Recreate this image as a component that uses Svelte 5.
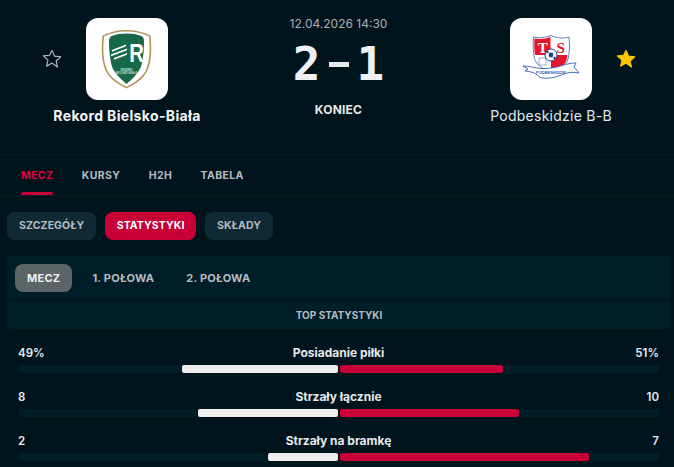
<script>
  const tabs = ['MECZ', 'KURSY', 'H2H', 'TABELA'];
  const pills = ['SZCZEGÓŁY', 'STATYSTYKI', 'SKŁADY'];
  const periods = ['MECZ', '1. POŁOWA', '2. POŁOWA'];
  const stats = [
    { name: 'Posiadanie piłki', home: '49%', away: '51%', h: 49, a: 51 },
    { name: 'Strzały łącznie', home: '8', away: '10', h: 44, a: 56 },
    { name: 'Strzały na bramkę', home: '2', away: '7', h: 22, a: 78 }
  ];
</script>

<div class="page">
  <header class="match">
    <div class="side">
      <svg class="star" viewBox="0 0 24 24" width="22" height="22">
        <path d="M12 2.600l2.800 6.300 6.800.7-5.100 4.600 1.500 6.700L12 16.400l-5.900 3.500 1.500-6.700-5.100-4.600 6.800-.7z" fill="none" stroke="#b9c0c4" stroke-width="1.200" stroke-linejoin="round" />
      </svg>
      <div class="team">
        <div class="logo">
          <svg viewBox="0 0 82 82" width="82" height="82">
            <path d="M40.500 12c9 0 17 2 24 5.500 1.500 14 1 25-3 35-4 8-11 13-21 18-10-5-17-10-21-18-4-10-4.500-21-3-35 7-3.500 15-5.500 24-5.500z" fill="#b2935a" />
            <path d="M40.500 13.500c8 0 16 1.800 22.500 5 1.300 13 .8 23.500-3 33.500-3.800 7.400-10 12-19.500 16.800-9.500-4.800-15.700-9.400-19.500-16.800-3.800-10-4.300-20.500-3-33.500 6.500-3.200 14.500-5 22.500-5z" fill="#fff" />
            <path d="M40.500 15.500c5.500 0 11 .8 15 2.500 1.500 1 2.500 2.500 2.500 5 0 10-1 20-3.500 27-3.400 6.600-8 11-14 16-6-5-10.600-9.400-14-16-2.500-7-3.500-17-3.500-27 0-2.500 1-4 2.500-5 4-1.700 9.500-2.500 15-2.500z" fill="#17694a" />
            <text transform="translate(50.500 44) scale(0.78 1)" class="rek">R</text>
            <path d="M26 32l14-5.500v1.800l-14 5.500zM25 36.500l16-6v1.800l-16 6zM28 40l13-5v1.800l-13 5z" fill="#fff" />
            <text x="40.500" y="52.500" class="rek-small">REKORD</text>
            <text x="40.500" y="56" class="rek-small">BIELSKO-BIAŁA</text>
          </svg>
        </div>
        <div class="name strong">Rekord Bielsko-Biała</div>
      </div>
    </div>

    <div class="center">
      <div class="date">12.04.2026 14:30</div>
      <div class="score"><span>2</span><i></i><span>1</span></div>
      <div class="status">KONIEC</div>
    </div>

    <div class="side away">
      <div class="team">
        <div class="logo">
          <svg viewBox="0 0 82 82" width="82" height="82">
            <path d="M23.500 19c6 1.500 12 .5 17.500-1.500 5.500 2.500 12 3.500 18 1.500 1 9 .5 16-1 22-2 6.500-7.500 10-16.500 13-9-3-15-7-17-13.500-1.500-6-1.500-13.500-1-21.500z" fill="#fff" stroke="#3560b0" stroke-width="0.8" />
            <path d="M24.500 20.500c5.500 1 11 .5 16-1.500v18H25c-.8-5-1-10.500-.5-16.500zM41 37h16.500c-.3 2-.7 3.500-1 5-1.500 5-6 8.500-15.500 11.500z" fill="#e4162d" />
            <text x="32.700" y="35" class="ts white">T</text>
            <text x="50.700" y="35" class="ts red">S</text>
            <path d="M29 40h7v7h-7z" fill="none" stroke="#7f9bcc" stroke-width="0.8" />
            <circle cx="41" cy="37" r="6" fill="#fff" stroke="#1c3f8f" />
            <circle cx="41" cy="37" r="2.400" fill="#1c3f8f" />
            <circle cx="37.500" cy="34" r="1.200" fill="#1c3f8f" />
            <circle cx="44.500" cy="40" r="1.200" fill="#1c3f8f" />
            <path d="M13 48c6 0 12 2 18 2.500 8 .5 15-1 21-3 5-1.500 9-2.500 14-2.500l-2 4 5 6c-5-1-10-1-15 1-7 3-15 5-22 4-2.500-.5-4-2-6-4-3-2-7-2.500-11-3l3-2z" fill="#fff" stroke="#3560b0" stroke-width="0.9" />
            <text x="41" y="56" class="ts-small">PODBESKIDZIE</text>
          </svg>
        </div>
        <div class="name">Podbeskidzie B-B</div>
      </div>
      <svg class="star" viewBox="0 0 24 24" width="22" height="22">
        <path d="M12 2.600l2.800 6.300 6.800.7-5.100 4.600 1.500 6.700L12 16.400l-5.900 3.500 1.500-6.700-5.100-4.600 6.800-.7z" fill="#fdc700" stroke="#fdc700" stroke-width="1.200" stroke-linejoin="round" />
      </svg>
    </div>
  </header>

  <nav class="tabs">
    {#each tabs as tab, i}
      <div class="tab" class:active={i === 0}>{tab}</div>
    {/each}
  </nav>

  <div class="pills">
    {#each pills as pill, i}
      <div class="pill" class:on={i === 1}>{pill}</div>
    {/each}
  </div>

  <section class="panel">
    <div class="periods">
      {#each periods as p, i}
        <div class="period" class:on={i === 0}>{p}</div>
      {/each}
    </div>
    <div class="panel-title">TOP STATYSTYKI</div>
  </section>

  <section class="stats">
    {#each stats as s}
      <div class="stat">
        <div class="labels">
          <span>{s.home}</span>
          <span class="stat-name">{s.name}</span>
          <span class="end">{s.away}</span>
        </div>
        <div class="bars">
          <div class="track left"><div class="fill home" style="width: {s.h}%"></div></div>
          <div class="track"><div class="fill guest" style="width: {s.a}%"></div></div>
        </div>
      </div>
    {/each}
  </section>
</div>

<style>
  :global(body) {
    background: #00141e;
    overflow: hidden;
  }

  .page {
    width: 674px;
    height: 467px;
    overflow: hidden;
    background: #00141e;
    color: #eef0f1;
    font-family: Inter, "Noto Sans", sans-serif;
  }

  .match {
    display: grid;
    grid-template-columns: 1fr 120px 1fr;
    height: 155px;
    padding-top: 18px;
    box-sizing: border-box;
    border-bottom: 1px solid #001e28;
  }

  .side {
    display: flex;
    align-items: flex-start;
    padding-left: 41px;
  }

  .side.away {
    justify-content: flex-end;
    padding-left: 0;
    padding-right: 37px;
  }

  .star {
    margin-top: 30px;
    flex: none;
  }

  .team {
    width: 128px;
    display: flex;
    flex-direction: column;
    align-items: center;
  }

  .logo {
    width: 82px;
    height: 82px;
    background: #fff;
    border-radius: 12px;
  }

  .logo svg {
    display: block;
  }

  .rek {
    font: 700 26px "Liberation Sans", sans-serif;
    fill: #fff;
    text-anchor: middle;
  }

  .rek-small {
    font: 700 2.800px Inter, sans-serif;
    fill: #cfe0d8;
    text-anchor: middle;
  }

  .ts {
    font: 700 15px "Liberation Serif", serif;
    text-anchor: middle;
  }

  .white {
    fill: #fff;
  }

  .red {
    fill: #e4162d;
  }

  .ts-small {
    font: 700 4px "Liberation Sans", sans-serif;
    fill: #3560b0;
    text-anchor: middle;
  }

  .name {
    margin-top: 7px;
    font-size: 14px;
    line-height: 18px;
    letter-spacing: 0.25px;
    color: #e6e9ea;
    white-space: nowrap;
  }

  .name.strong {
    font-weight: 700;
    letter-spacing: 0.35px;
    color: #f2f3f4;
  }

  .center {
    display: flex;
    flex-direction: column;
    align-items: center;
    margin-top: -18px;
    padding-left: 3px;
  }

  .date {
    margin-top: 16px;
    font-size: 12px;
    line-height: 16px;
    color: #a9b1b5;
    white-space: nowrap;
  }

  .score {
    display: flex;
    align-items: center;
    height: 34px;
    margin-top: 15px;
    font: 700 46px/34px "DejaVu Sans Mono", monospace;
    color: #eef0f1;
  }

  .score i {
    display: block;
    width: 20px;
    height: 5px;
    margin: 0 8px;
    background: #e6e8e9;
  }

  .status {
    margin-top: 21px;
    font-size: 12px;
    font-weight: 700;
    line-height: 16px;
    letter-spacing: 0.2px;
    color: #e6e9ea;
  }

  .tabs {
    display: flex;
    gap: 28.500px;
    height: 40px;
    padding-left: 21px;
    border-bottom: 1px solid #001e28;
  }

  .tab {
    position: relative;
    padding-top: 13px;
    font-size: 10.500px;
    font-weight: 700;
    line-height: 15px;
    letter-spacing: 0.35px;
    color: #b4bcc0;
  }

  .tab.active {
    color: #e6003c;
  }

  .tab.active::after {
    content: '';
    position: absolute;
    left: 0;
    right: 0;
    bottom: 0;
    height: 3px;
    border-radius: 2px 2px 0 0;
    background: #c80037;
  }

  .pills {
    display: flex;
    gap: 8.500px;
    padding: 16px 7px;
  }

  .pill {
    height: 28px;
    padding: 0 12px;
    border-radius: 8px;
    background: #0f2a35;
    font-size: 10.500px;
    font-weight: 700;
    line-height: 28px;
    letter-spacing: 0.1px;
    color: #b4bcc0;
  }

  .pill.on {
    background: #c80037;
    color: #fff;
  }

  .panel {
    display: flex;
    flex-direction: column;
    gap: 1px;
    margin: 0 3px 0 7px;
  }

  .periods {
    display: flex;
    gap: 8px;
    height: 44px;
    padding: 8px;
    box-sizing: border-box;
    border-radius: 4px 4px 0 0;
    background: #001e28;
  }

  .period {
    padding: 0 12px;
    border-radius: 8px;
    font-size: 11px;
    font-weight: 700;
    line-height: 28px;
    letter-spacing: 0.25px;
    color: #b4bcc0;
  }

  .period.on {
    background: #5c6466;
    color: #eef0f1;
  }

  .panel-title {
    height: 28px;
    border-radius: 0 0 4px 4px;
    background: #001e28;
    font-size: 10px;
    font-weight: 700;
    line-height: 28px;
    text-align: center;
    color: #b4bcc0;
  }

  .stats {
    display: flex;
    flex-direction: column;
    gap: 14px;
    padding: 16px 15px 0 18px;
  }

  .stat {
    height: 30px;
  }

  .labels {
    display: grid;
    grid-template-columns: 1fr auto 1fr;
    height: 20px;
    font-size: 11.500px;
    font-weight: 600;
    line-height: 16px;
    color: #e6e9ea;
  }

  .stat-name {
    font-size: 12px;
    font-weight: 700;
  }

  .end {
    text-align: right;
  }

  .bars {
    display: flex;
    gap: 2px;
    margin-left: 1px;
  }

  .track {
    flex: 1;
    display: flex;
    height: 8px;
    border-radius: 2px;
    background: #001e28;
  }

  .track.left {
    justify-content: flex-end;
  }

  .fill {
    border-radius: 2px;
  }

  .home {
    background: #eeeeee;
  }

  .guest {
    background: #c80037;
  }
</style>
